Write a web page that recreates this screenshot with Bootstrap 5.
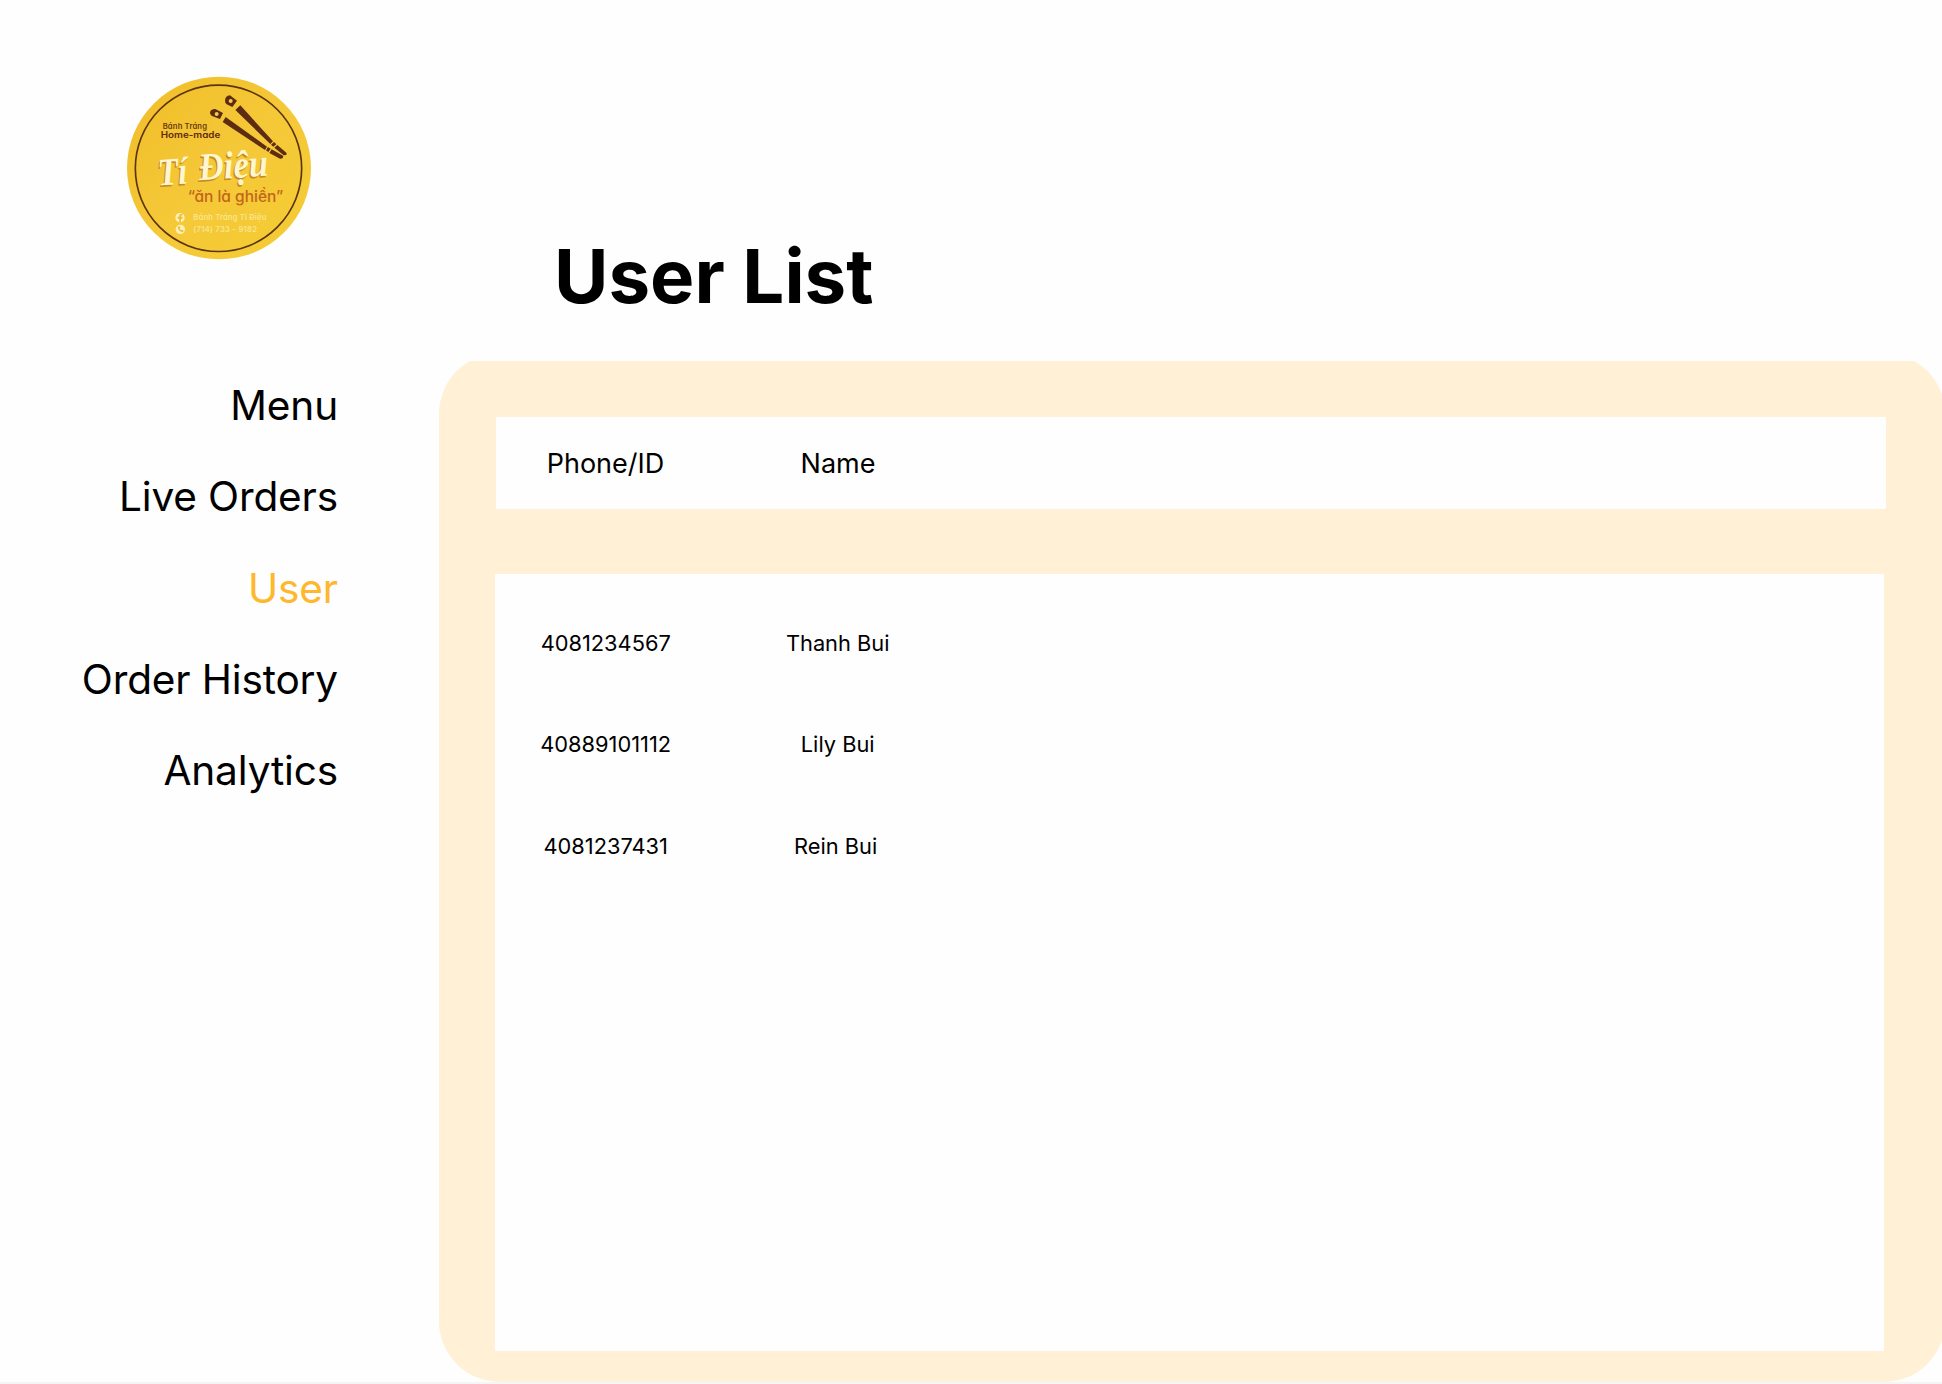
<!DOCTYPE html>
<html lang="en">
<head>
<meta charset="utf-8">
<title>User List</title>
<link href="https://cdn.jsdelivr.net/npm/bootstrap@5.3.0/dist/css/bootstrap.min.css" rel="stylesheet">
<style>
body{font-family:Inter,"Liberation Sans",sans-serif;color:#000;background:#fefefe;height:1384px;overflow:hidden}
.page-body{height:1381.5px}
.side{width:439px;padding-top:70px}
.brand{width:200px;height:200px;margin-left:120px;display:block}
.brand-copy{font-feature-settings:"cv11"}
.side-nav{margin-top:90px;width:338px}
.side-nav .nav-link{font-size:40.6px;letter-spacing:-.15px;line-height:91.3px;padding:0;color:#000;text-align:right;white-space:nowrap}
.side-nav .nav-link.active{color:#ffb72b}
.page-title{font-size:74.4px;line-height:90px;font-weight:700;margin:231px 0 0 115px;height:130px}
.panel-clip{overflow:hidden;height:1020.5px}
.panel{width:1506px;height:1028.5px;margin-top:-8px;background:#fff0d6;border-radius:61px;padding-top:64.3px}
.sheet{background:#fefefe;width:1389.7px}
.sheet-head{height:91.7px;margin-left:57px;font-size:27px;line-height:93px}
.sheet-body{height:777px;margin:65px 0 0 55.7px;font-size:21.8px;padding-top:19px}
.sheet-body .d-flex{line-height:101.3px}
.c-id,.c-name{width:232px;text-align:center;white-space:nowrap}
.sheet-head .c-id{margin-left:-7px;width:233px}
.sheet-body .c-id{margin-left:-5px}
.foot{height:2.5px;background:#f5f5f5}
</style>
</head>
<body>
<div class="page-body d-flex">
  <aside class="side flex-shrink-0">
    <svg class="brand" viewBox="0 0 600 600" role="img" aria-label="Tí Điệu">
      <defs><linearGradient id="gold" x1="0" y1="0" x2="1" y2="1"><stop offset="0" stop-color="#f0bd27"/><stop offset=".5" stop-color="#f5c838"/><stop offset="1" stop-color="#f4cc33"/></linearGradient></defs>
      <ellipse cx="297" cy="294" rx="276" ry="274" fill="url(#gold)"/>
      <circle cx="295.500" cy="295" r="249.500" fill="none" stroke="#5b3310" stroke-width="5"/>
      <g fill="#5e2c10" transform="translate(240 54)">
        <path d="M75 38Q76 23 90 22L111 38 97 57 80 49Q75 45 75 38ZM121 52L219 160 211 168 106 66ZM222 162L229 169 220 176 213 170ZM232 171L259 194Q263 203 251 202L223 179Z"/>
        <path d="M30 74Q31 63 46 63L69 75 60 93 36 84Q30 80 30 74ZM77 87L201 176 195 186 68 102ZM204 177L212 182 205 192 198 187ZM215 184L249 203Q252 213 240 212L208 195Z"/>
      </g>
      <circle cx="332" cy="93" r="6" fill="#f5ca50"/><circle cx="290" cy="132" r="6" fill="#f5ca50"/>
      <g class="brand-copy" font-family="Inter,sans-serif" font-weight="600">
        <text x="128" y="178" font-size="23" textLength="133" fill="#6b3a10">Bánh Tráng</text>
        <text x="122" y="205" font-size="26" textLength="179" lengthAdjust="spacingAndGlyphs" fill="#5e2c10">Home-made</text>
        <text x="203" y="396" font-size="46" font-weight="500" textLength="287" lengthAdjust="spacingAndGlyphs" fill="#c3651a">“ăn là ghiền”</text>
        <text x="220" y="451" font-size="23" textLength="219" fill="#fbe58c">Bánh Tráng Tí Điệu</text>
        <text x="220" y="487" font-size="23" textLength="191" fill="#fbe58c">(714) 733 - 9182</text>
      </g>
      <g font-family="'Liberation Serif',serif" font-weight="700" font-style="italic" font-size="116" transform="rotate(-4 280 320)">
        <g fill="#c58b20" transform="translate(-4 5)"><text x="114" y="335" textLength="89" lengthAdjust="spacingAndGlyphs">Tí</text><text x="238" y="328" textLength="208" lengthAdjust="spacingAndGlyphs">Điệu</text></g>
        <g fill="#fff6cf"><text x="114" y="335" textLength="89" lengthAdjust="spacingAndGlyphs">Tí</text><text x="238" y="328" textLength="208" lengthAdjust="spacingAndGlyphs">Điệu</text></g>
      </g>
      <circle cx="180" cy="443" r="14" fill="#fdf0b8"/>
      <path d="M178 457V446H173V440H178V437Q178 431 184 431H188V436H185Q183 436 183 440H188L187 446H183V457Z" fill="#efbd2f"/>
      <circle cx="181" cy="478" r="14" fill="#fdf0b8"/>
      <path d="M173 471Q175 484 188 487L191 482 186 479 183 481Q180 479 179 475L181 473 178 468Z" fill="#efbd2f"/>
    </svg>
    <nav class="side-nav nav flex-column">
      <a class="nav-link" href="#">Menu</a>
      <a class="nav-link" href="#">Live Orders</a>
      <a class="nav-link active" href="#">User</a>
      <a class="nav-link" href="#">Order History</a>
      <a class="nav-link" href="#">Analytics</a>
    </nav>
  </aside>
  <main class="flex-grow-1 overflow-hidden">
    <h1 class="page-title">User List</h1>
    <section class="panel-clip">
      <div class="panel">
        <div class="sheet sheet-head d-flex"><div class="c-id">Phone/ID</div><div class="c-name">Name</div></div>
        <div class="sheet sheet-body">
          <div class="d-flex"><div class="c-id">4081234567</div><div class="c-name">Thanh Bui</div></div>
          <div class="d-flex"><div class="c-id">40889101112</div><div class="c-name">Lily Bui</div></div>
          <div class="d-flex"><div class="c-id">4081237431</div><div class="c-name pe-1">Rein Bui</div></div>
        </div>
      </div>
    </section>
  </main>
</div>
<footer class="foot"></footer>
<script src="https://cdn.jsdelivr.net/npm/bootstrap@5.3.0/dist/js/bootstrap.bundle.min.js"></script>
</body>
</html>
